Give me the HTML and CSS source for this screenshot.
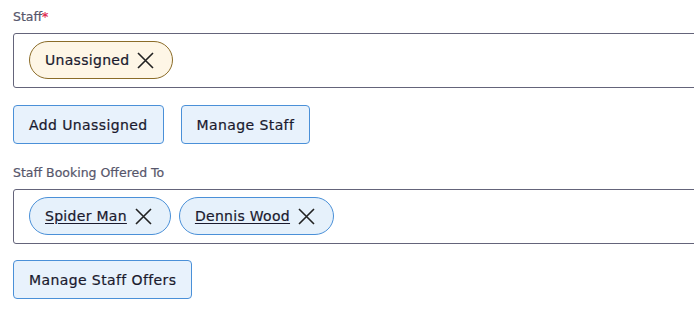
FILE: index.html
```html
<!doctype html>
<html>
<head>
<meta charset="utf-8">
<title>Staff</title>
<link rel="stylesheet" href="styles.css">
</head>
<body>
<div class="form">
	<div class="field">
		<label class="field-label">Staff<span class="req">*</span></label>
		<div class="field-box">
			<span class="chip chip-warn">Unassigned
				<svg class="chip-x" width="17" height="17" viewBox="0 0 17 17"><path d="M1 1L16 16M16 1L1 16" stroke="#222" stroke-width="1.6" fill="none"/></svg>
			</span>
		</div>
	</div>
	<div class="btn-row">
		<a class="btn" href="javascript:;">Add Unassigned</a>
		<a class="btn" href="javascript:;">Manage Staff</a>
	</div>

	<div class="field">
		<label class="field-label">Staff Booking Offered To</label>
		<div class="field-box">
			<span class="chip chip-info"><a href="javascript:;">Spider Man</a>
				<svg class="chip-x" width="17" height="17" viewBox="0 0 17 17"><path d="M1 1L16 16M16 1L1 16" stroke="#222" stroke-width="1.6" fill="none"/></svg>
			</span>
			<span class="chip chip-info"><a href="javascript:;">Dennis Wood</a>
				<svg class="chip-x" width="17" height="17" viewBox="0 0 17 17"><path d="M1 1L16 16M16 1L1 16" stroke="#222" stroke-width="1.6" fill="none"/></svg>
			</span>
		</div>
	</div>
	<div class="btn-row">
		<a class="btn" href="javascript:;">Manage Staff Offers</a>
	</div>
</div>
</body>
</html>
```

FILE: styles.css
```css
*{padding: 0; margin: 0; box-sizing: border-box;}
html,body{overflow: hidden; background: #fff;}
body{font-family: "DejaVu Sans", sans-serif; color: #1a1a2e;}
.form{padding: 9px 13px 0 13px; width: 740px;}
.field-label{display: block; font-size: 12.5px; line-height: 16px; color: #56566b; margin-bottom: 8px; -webkit-text-stroke: 0.2px currentColor;}
.field-label .req{color: #e0204a;}
.field-box{display: flex; gap: 8px; border: 1px solid #64647a; border-radius: 3px; padding: 7px 15px 8px;}
.chip{display: inline-flex; align-items: center; gap: 8px; height: 38px; padding: 0 18px 0 15px; border: 1px solid; border-radius: 20px; font-size: 14px; letter-spacing: 0.3px; -webkit-text-stroke: 0.2px currentColor;}
.chip a{color: #1a1a2e; text-decoration: underline; text-underline-offset: 2px;}
.chip-warn{background: #fef6e6; border-color: #8b6c28;}
.chip-info{background: #e6f1fb; border-color: #4a90d8;}
.btn-row{display: flex; gap: 17px; margin: 17px 0 21px;}
.btn-row:last-child{margin-top: 16px;}
.btn{display: inline-flex; align-items: center; height: 39px; padding: 0 15px; border: 1px solid #4a90d8; border-radius: 4px; background: #e8f2fc; color: #1a1a2e; font-size: 14px; letter-spacing: 0.4px; -webkit-text-stroke: 0.2px currentColor; text-decoration: none;}
```
